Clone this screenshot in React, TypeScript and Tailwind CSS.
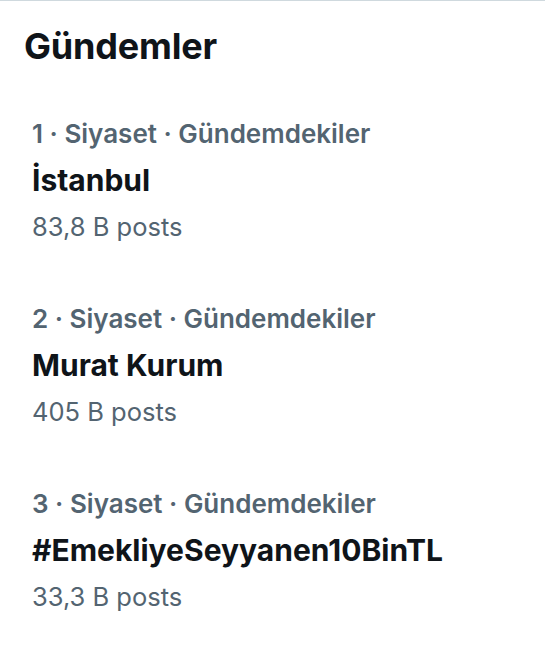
import React from "react";

const items = [
  { n: 1, title: "İstanbul", posts: "83,8 B posts" },
  { n: 2, title: "Murat Kurum", posts: "405 B posts" },
  { n: 3, title: "#EmekliyeSeyyanen10BinTL", posts: "33,3 B posts" },
];

export default function App() {
  return (
    <div
      className="w-[545px] h-[665px] bg-white border-t border-[#cfd9de] overflow-hidden"
      style={{ fontFamily: "Inter, 'Noto Sans', sans-serif" }}
    >
      <h1 className="pl-[24px] pt-[23px] text-[36px] leading-[44px] font-bold text-[#0f1419] tracking-[-0.2px]">
        Gündemler
      </h1>
      <div className="pt-[50px]">
        {items.map((it) => (
          <div key={it.n} className="pl-[32px] h-[185px]">
            <div className="text-[26px] leading-[32px] font-semibold text-[#536471]">
              {it.n} · Siyaset · Gündemdekiler
            </div>
            <div className="mt-[12px] text-[30px] leading-[36px] font-bold text-[#0f1419]">
              {it.title}
            </div>
            <div className="mt-[13px] text-[25.5px] leading-[32px] text-[#536471]">
              {it.posts}
            </div>
          </div>
        ))}
      </div>
    </div>
  );
}
